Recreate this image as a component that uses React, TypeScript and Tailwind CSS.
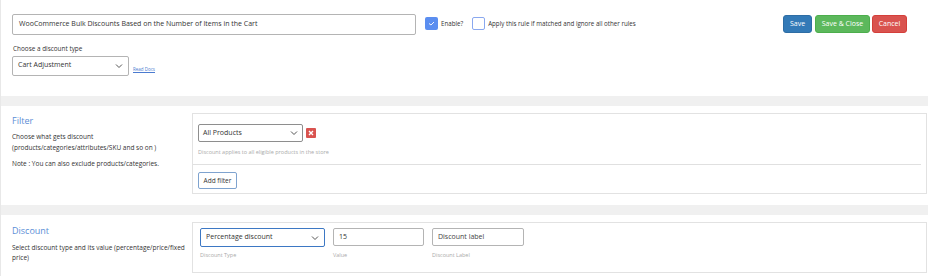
import React from "react";

const font = { fontFamily: '"Open Sans", "Noto Sans", sans-serif' };

function Chevron() {
  return (
    <svg width="8" height="6" viewBox="0 0 8 6" className="text-[#555]">
      <path d="M1 1.5 L4 4.5 L7 1.5" fill="none" stroke="currentColor" strokeWidth="1" />
    </svg>
  );
}

export default function App() {
  return (
    <div
      className="w-[928px] h-[276px] bg-white overflow-hidden text-[#333] border-l border-[#e8e8e8] flex flex-col"
      style={font}
    >
      {/* Top section */}
      <div className="h-[96px] shrink-0 pl-[11px] pr-[21px] pt-[14px] flex flex-col">
        <div className="flex items-start">
          <div className="w-[404px] h-[21px] border border-[#b4b4b4] rounded-[2px] flex items-center pl-[6px] text-[7px] text-[#333]">
            WooCommerce Bulk Discounts Based on the Number of Items in the Cart
          </div>
          <div className="flex items-center ml-[9px] mt-[3px]">
            <div className="w-[13px] h-[13px] bg-[#5b8ef0] rounded-[2px] flex items-center justify-center">
              <svg width="7" height="5" viewBox="0 0 7 5">
                <path d="M1 2.5 L3 4 L6 1" fill="none" stroke="white" strokeWidth="0.9" />
              </svg>
            </div>
            <span className="ml-[3px] text-[6.2px] text-[#333]">Enable?</span>
          </div>
          <div className="flex items-center ml-[9px] mt-[3px]">
            <div className="w-[13px] h-[13px] border border-[#8aa8ef] rounded-[2px] bg-white" />
            <span className="ml-[3px] text-[6.2px] text-[#333]">Apply this rule if matched and ignore all other rules</span>
          </div>
          <div className="ml-auto flex items-center gap-[2px] mt-[1px]">
            <div className="w-[29px] h-[18px] bg-[#337ab7] border border-[#2e6da4] rounded-[3px] text-white text-[7px] flex items-center justify-center">
              Save
            </div>
            <div className="w-[55px] h-[18px] bg-[#5cb85c] border border-[#4cae4c] rounded-[3px] text-white text-[7px] flex items-center justify-center ml-[1px]">
              Save &amp; Close
            </div>
            <div className="w-[35px] h-[18px] bg-[#d9534f] border border-[#d43f3a] rounded-[3px] text-white text-[7px] flex items-center justify-center">
              Cancel
            </div>
          </div>
        </div>
        <div className="mt-[9px] text-[6.4px] text-[#333] pl-[1px]">Choose a discount type</div>
        <div className="flex items-end mt-[2px]">
          <div className="w-[117px] h-[20px] border border-[#b4b4b4] rounded-[2px] flex items-center justify-between px-[5px] text-[7px]">
            <span>Cart Adjustment</span>
            <Chevron />
          </div>
          <a className="ml-[4px] mb-[3px] text-[4.5px] text-[#4b7bd0] underline">Read Docs</a>
        </div>
      </div>

      <div className="h-[10px] shrink-0 bg-[#f0f0f0]" />

      {/* Filter section */}
      <div className="h-[99px] shrink-0 flex pl-[11px] pt-[7px]">
        <div className="w-[180px] shrink-0 pt-[1px]">
          <div className="text-[9px] text-[#5b8ed6]">Filter</div>
          <div className="mt-[3px] text-[6.5px] leading-[11px] text-[#333]">
            Choose what gets discount
            <br />
            (products/categories/attributes/SKU and so on )
          </div>
          <div className="mt-[6px] text-[6.5px] text-[#333]">Note : You can also exclude products/categories.</div>
        </div>
        <div className="w-[735px] h-[81px] border border-[#e2e2e2] flex flex-col">
          <div className="px-[5px] pt-[10px]">
            <div className="flex items-center">
              <div className="w-[105px] h-[18px] border border-[#8e8e8e] rounded-[2px] flex items-center justify-between px-[4px] text-[7px]">
                <span>All Products</span>
                <Chevron />
              </div>
              <div className="ml-[3px] w-[10px] h-[10px] bg-[#d9534f] rounded-[1px] flex items-center justify-center">
                <svg width="6" height="6" viewBox="0 0 6 6">
                  <path d="M1 1 L5 5 M5 1 L1 5" stroke="white" strokeWidth="1.4" />
                </svg>
              </div>
            </div>
            <div className="mt-[6px] text-[5.5px] text-[#aaa]">Discount applies to all eligible products in the store</div>
          </div>
          <div className="mt-[8px] mr-[5px] h-px bg-[#e0e0e0]" />
          <div className="px-[5px] pt-[7px]">
            <div className="w-[39px] h-[17px] border border-[#7fa3cf] rounded-[2px] flex items-center justify-center text-[6.5px] text-[#333]">
              Add filter
            </div>
          </div>
        </div>
      </div>

      <div className="h-[10px] shrink-0 bg-[#f0f0f0]" />

      {/* Discount section */}
      <div className="flex-1 flex pl-[11px] pt-[7px]">
        <div className="w-[180px] shrink-0 pt-[2px]">
          <div className="text-[9px] text-[#5b8ed6]">Discount</div>
          <div className="mt-[5px] text-[6.5px] leading-[10px] text-[#333] w-[178px]">
            Select discount type and its value (percentage/price/fixed price)
          </div>
        </div>
        <div className="w-[735px] h-[51px] border border-[#e2e2e2] flex items-start px-[7px] pt-[5px] gap-[8px]">
          <div className="flex flex-col">
            <div className="w-[125px] h-[19px] border border-[#3d78c4] rounded-[2px] flex items-center justify-between px-[5px] text-[7px]">
              <span>Percentage discount</span>
              <Chevron />
            </div>
            <div className="mt-[4px] text-[5.5px] text-[#aaa]">Discount Type</div>
          </div>
          <div className="flex flex-col">
            <div className="w-[91px] h-[18px] border border-[#b4b4b4] rounded-[2px] flex items-center px-[5px] text-[7px]">
              15
            </div>
            <div className="mt-[5px] text-[5.5px] text-[#aaa]">Value</div>
          </div>
          <div className="flex flex-col">
            <div className="w-[92px] h-[18px] border border-[#b4b4b4] rounded-[2px] flex items-center px-[5px] text-[7px] text-[#444]">
              Discount label
            </div>
            <div className="mt-[5px] text-[5.5px] text-[#aaa]">Discount Label</div>
          </div>
        </div>
      </div>
    </div>
  );
}
